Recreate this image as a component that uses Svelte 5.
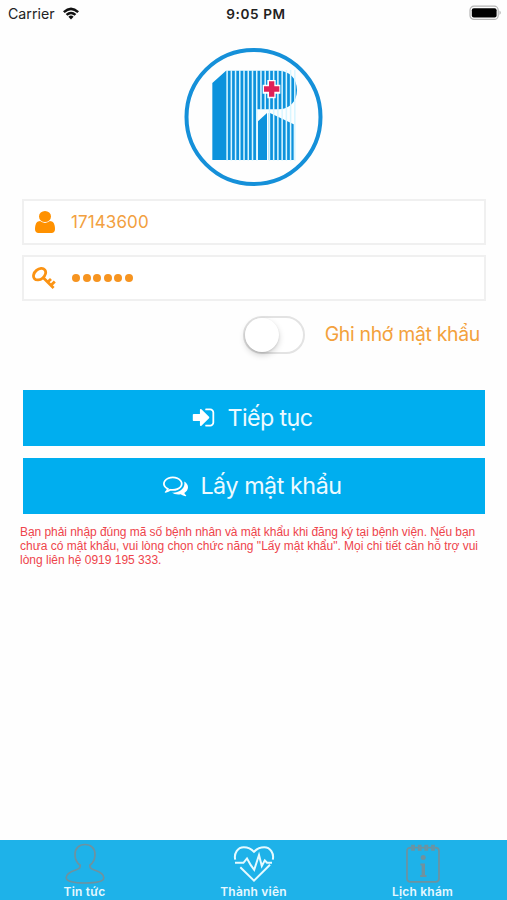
<script lang="ts">
	let patientId = $state('17143600');
	let password = $state('123456');
	let remember = $state(false);
	let activeTab = $state('member');

	const tabs = [
		{ id: 'news', label: 'Tin tức' },
		{ id: 'member', label: 'Thành viên' },
		{ id: 'schedule', label: 'Lịch khám' }
	];

	// white gaps that cut the logo letter into stripes
	const gaps = Array.from({ length: 17 }, (_, i) => 139 + i * 12.7);
</script>

<div class="screen">
	<header class="status">
		<div class="carrier">
			<span>Carrier</span>
			<svg class="wifi" viewBox="0 0 17 13">
				<path d="M0.5 4.2Q8.5 -3 16.5 4.2L14.8 6Q8.5 0.5 2.2 6Z" />
				<path d="M3.2 7Q8.5 2.4 13.8 7L12.1 8.7Q8.5 5.6 4.9 8.7Z" />
				<path d="M5.9 9.7Q8.5 7.5 11.1 9.7L8.5 12.5Z" />
			</svg>
		</div>
		<strong class="time">9:05 PM</strong>
		<svg class="battery" viewBox="0 0 33 16">
			<rect x="1" y="1.2" width="28.2" height="13.2" rx="4" fill="#fff" stroke="#b5b5b5" stroke-width="1.2" />
			<rect x="2.8" y="3.2" width="24.8" height="9.2" rx="2" fill="#000" />
			<path d="M30.6 5.6Q32.6 7.8 30.6 10Z" fill="#999" />
		</svg>
	</header>

	<main>
		<svg class="logo" viewBox="0 0 441 438">
			<circle cx="220.5" cy="219" r="201" fill="none" stroke="#1590d9" stroke-width="12" />
			<path
				d="M97 117L138 80H295C328 80 351 103 351 138C351 173 328 196 295 196H231V348H97Z"
				fill="#0d92dc"
			/>
			<path d="M234 232L261 207H270L341 241V348H234Z" fill="#0d92dc" />
			{#each gaps as x, i}
				<rect {x} y="78" width="4.6" height={i > 7 && i < 10 ? 120 : 272} fill="#d9f6ff" />
			{/each}
			<path d="M261 205H266V350H261Z" fill="#fff" />
			<path d="M262 108H287V122H301V149H287V163H262V149H248V122H262Z" fill="#fff" />
			<path d="M267 112H283V127H298V143H283V158H267V143H252V127H267Z" fill="#df2058" />
		</svg>

		<form onsubmit={(e) => e.preventDefault()}>
			<label class="field">
				<svg class="user" viewBox="256 128 1280 1536" preserveAspectRatio="none">
					<path d="M1536 1399q0 109-62.5 187t-150.5 78h-854q-88 0-150.5-78t-62.5-187q0-85 8.5-160.5t31.5-152 58.5-131 94-89 134.5-34.5q131 128 313 128t313-128q76 0 134.5 34.5t94 89 58.5 131 31.5 152 8.5 160.5zm-256-887q0 159-112.5 271.5t-271.5 112.5-271.5-112.5-112.5-271.5 112.5-271.5 271.5-112.5 271.5 112.5 112.5 271.5z" />
				</svg>
				<input type="text" bind:value={patientId} />
			</label>
			<label class="field">
				<svg class="key" viewBox="0 0 24 23">
					<ellipse cx="7.6" cy="7.2" rx="6.8" ry="4.9" transform="rotate(-40 7.6 7.2)" />
					<path d="M10.8 10.2L21.6 20.9M15.8 15.1L19 12M19 18.3L22.8 14.6" />
				</svg>
				<span class="dots">
					{#each password as _}
						<i></i>
					{/each}
				</span>
			</label>

			<div class="remember">
				<button
					type="button"
					class="switch"
					class:on={remember}
					aria-label="Ghi nhớ mật khẩu"
					onclick={() => (remember = !remember)}
				>
					<span class="knob"></span>
				</button>
				<span class="remember-text">Ghi nhớ mật khẩu</span>
			</div>

			<button class="action" type="submit">
				<svg viewBox="0 0 1792 1792">
					<path d="M1312 896q0 26-19 45l-544 544q-19 19-45 19t-45-19-19-45v-288h-448q-26 0-45-19t-19-45v-384q0-26 19-45t45-19h448v-288q0-26 19-45t45-19 45 19l544 544q19 19 19 45zm352-352v704q0 119-84.5 203.5t-203.5 84.5h-320q-13 0-22.5-9.5t-9.5-22.5q0-4-1-20t-.5-26.5 3-23.5 10-19.5 20.5-6.5h320q66 0 113-47t47-113v-704q0-66-47-113t-113-47h-312l-11.5-1-11.5-3-8-5.5-7-9-2-13.5q0-4-1-20t-.5-26.5 3-23.5 10-19.5 20.5-6.5h320q119 0 203.5 84.5t84.5 203.5z" />
				</svg>
				<span class="continue">Tiếp tục</span>
			</button>
			<button class="action" type="button">
				<svg viewBox="0 0 1792 1792">
					<path d="M704 384q-153 0-286 52t-211.5 141-78.5 191q0 82 53 158t149 132l97 56-35 84q34-20 62-39l44-31 53 10q78 14 153 14 153 0 286-52t211.5-141 78.5-191-78.5-191-211.5-141-286-52zm0-128q191 0 353.5 68.5t256.5 186.5 94 257-94 257-256.5 186.5-353.5 68.5q-86 0-176-16-124 88-278 128-36 9-86 16h-3q-11 0-20.5-8t-11.5-21q-1-3-1-6.5t.5-6.5 2-6l2.5-5 3.5-5.5 4-5 4.5-5 4-4.5q5-6 23-25t26-29.5 22.5-29 25-38.5 20.5-44q-124-72-195-177t-71-224q0-139 94-257t256.5-186.5 353.5-68.5zm822 1169q10 24 20.5 44t25 38.5 22.5 29 26 29.5 23 25q1 1 4 4.5t4.5 5 4 5 3.5 5.5l2.5 5 2 6 .5 6.5-1 6.5q-3 14-13 22t-22 7q-50-7-86-16-154-40-278-128-90 16-176 16-271 0-472-132 58 4 88 4 161 0 309-45t264-129q125-92 192-212t67-254q0-77-23-152 129 71 204 178t75 230q0 120-71 224.5t-195 176.5z" />
				</svg>
				<span class="get-password">Lấy mật khẩu</span>
			</button>
		</form>

		<p class="note">
			<span class="first">Bạn phải nhập đúng mã số bệnh nhân và mật khẩu khi đăng ký tại bệnh viện. Nếu bạn</span>
			<span>chưa có mật khẩu, vui lòng chọn chức năng "Lấy mật khẩu". Mọi chi tiết cần hỗ trợ vui</span>
			<span>lòng liên hệ 0919 195 333.</span>
		</p>
	</main>

	<nav>
		{#each tabs as tab}
			<button class="tab" class:active={activeTab === tab.id} onclick={() => (activeTab = tab.id)}>
				<svg viewBox="0 0 42 42">
					{#if tab.id === 'news'}
						<path d="M16.2 23.2C12.6 20.6 11 16.5 11 12.4C11 6.2 15.2 2.5 21 2.5S31 6.2 31 12.4C31 16.5 29.4 20.6 25.8 23.2C25.8 26.4 27.5 27 30.4 28C35.5 29.6 39.8 31.4 39.8 35.8C39.8 39.5 32 41 21 41S2.2 39.5 2.2 35.8C2.2 31.4 6.5 29.6 11.6 28C14.5 27 16.2 26.4 16.2 23.2Z" />
					{:else if tab.id === 'member'}
						<path d="M2.2 17.6C0.8 11.4 4.6 5.2 10.8 5.2C15 5.2 18.5 7 21 9.8C23.5 7 27 5.2 31.2 5.2C37.4 5.2 41.2 11.4 39.8 17.6M7.3 25.2L21 38.6L37 22.8" />
						<path d="M2 20.8H10.4L14 16.4L17.8 23.2L21.2 27.8L26 13L28.8 24L31.8 18.4L34 20.8H39" />
					{:else}
						<path d="M9 5.6Q5 5.6 5 9V36.5Q5 39.8 8.5 39.8H33.5Q37 39.8 37 36.5V9Q37 5.6 33 5.6" />
						<path d="M10 3.5H12V7.8H10ZM16.7 3.5H18.7V7.8H16.7ZM23.3 3.5H25.3V7.8H23.3ZM30 3.5H32V7.8H30ZM12 5.6H16.7M18.7 5.6H23.3M25.3 5.6H30" />
						<path class="info" d="M18.4 21.4H23V33H24.4V35H18.2V33H19.6V23.4H18.4Z" />
						<circle class="info" cx="21.2" cy="15.6" r="2.5" />
					{/if}
				</svg>
				<span>{tab.label}</span>
			</button>
		{/each}
	</nav>
</div>

<style>
	:global(body) {
		background: #fff;
	}

	.screen {
		width: 507px;
		height: 900px;
		display: flex;
		flex-direction: column;
		background: #fefefe;
		font-family: Inter, 'Liberation Sans', sans-serif;
		overflow: hidden;
	}

	button {
		font: inherit;
		border: 0;
		padding: 0;
		cursor: pointer;
	}

	.status {
		height: 28px;
		flex-shrink: 0;
		display: grid;
		grid-template-columns: 1fr auto 1fr;
		align-items: center;
		padding: 0 5px 0 8px;
		font-size: 14.2px;
		color: #222;
	}

	.carrier {
		display: flex;
		align-items: center;
		gap: 7px;
		margin-top: -1px;
	}

	.wifi {
		width: 18px;
		height: 13px;
		margin-top: -1px;
		fill: #111;
	}

	.time {
		font-size: 13.6px;
		font-weight: 600;
		letter-spacing: 0.6px;
		padding-left: 2px;
	}

	.battery {
		width: 33px;
		height: 16px;
		justify-self: end;
		margin-top: -2px;
	}

	main {
		flex: 1;
		display: flex;
		flex-direction: column;
		padding: 16px 22px 0;
	}

	.logo {
		width: 147px;
		height: 146px;
		align-self: center;
		flex-shrink: 0;
	}

	form {
		display: flex;
		flex-direction: column;
		padding-top: 9px;
	}

	.field {
		box-sizing: border-box;
		width: 464px;
		height: 46px;
		display: flex;
		align-items: center;
		border: 2px solid #f0f0f0;
		margin-bottom: 10px;
		background: #fff;
	}

	.user {
		width: 20px;
		height: 22px;
		margin-left: 11px;
		margin-right: 16px;
		fill: #ff9100;
	}

	.key {
		width: 24px;
		height: 23px;
		margin-left: 8px;
		margin-right: 15px;
		fill: none;
		stroke: #fb9313;
		stroke-width: 2.8;
	}

	input {
		border: 0;
		outline: 0;
		padding: 0;
		width: 300px;
		background: transparent;
		color: #f2a040;
		font: 17px Inter, sans-serif;
		letter-spacing: 0.1px;
	}

	.dots {
		display: flex;
		gap: 2.5px;
		padding-left: 1px;
	}

	.dots i {
		width: 8px;
		height: 8px;
		border-radius: 50%;
		background: #f69420;
	}

	.remember {
		display: flex;
		align-items: center;
		justify-content: flex-end;
		height: 46px;
		padding-right: 5px;
		margin-top: 1px;
	}

	.switch {
		box-sizing: border-box;
		width: 62px;
		height: 38px;
		border: 2px solid #e3e3e3;
		border-radius: 19px;
		background: #fff;
		display: flex;
	}

	.switch.on {
		justify-content: flex-end;
		background: #00aeef;
	}

	.knob {
		width: 34px;
		height: 34px;
		border-radius: 50%;
		background: #fff;
		box-shadow: 0 3px 6px rgba(0, 0, 0, 0.18), 0 1px 2px rgba(0, 0, 0, 0.1);
	}

	.remember-text {
		margin: -2px 0 0 20px;
		font-size: 19.4px;
		letter-spacing: -0.3px;
		color: #f3a13c;
		white-space: nowrap;
	}

	.action {
		box-sizing: border-box;
		width: 462px;
		height: 56px;
		margin: 0 0 12px 1px;
		padding-right: 3px;
		display: flex;
		align-items: center;
		justify-content: center;
		gap: 12px;
		background: #00aeef;
		color: #edfaff;
		font-size: 23.3px;
	}

	.action:first-of-type {
		margin-top: 31.5px;
		padding-right: 5px;
	}

	.action svg {
		width: 25px;
		height: 25px;
		fill: #fff;
	}

	.continue {
		letter-spacing: -0.6px;
	}

	.get-password {
		letter-spacing: -0.45px;
	}

	.note {
		margin: -1px 0 0 -2px;
		font-family: 'Liberation Sans', Arial, sans-serif;
		font-size: 12px;
		line-height: 14px;
		color: #ee444b;
		white-space: nowrap;
	}

	.note span {
		display: block;
	}

	.note .first {
		letter-spacing: -0.055px;
	}

	nav {
		height: 60px;
		flex-shrink: 0;
		display: grid;
		grid-template-columns: repeat(3, 1fr);
		background: #1eb2e9;
	}

	.tab {
		display: flex;
		flex-direction: column;
		align-items: center;
		padding-top: 2px;
		background: none;
		color: #e6f8ff;
		font-size: 12px;
		font-weight: 600;
		letter-spacing: 0.2px;
		line-height: 15px;
	}

	.tab svg {
		width: 42px;
		height: 42px;
		fill: none;
		stroke: #6f929f;
		stroke-width: 1.7;
	}

	.tab.active svg {
		stroke: #e6faff;
		stroke-width: 2;
	}

	.tab .info {
		fill: #6f929f;
		stroke: none;
	}
</style>
